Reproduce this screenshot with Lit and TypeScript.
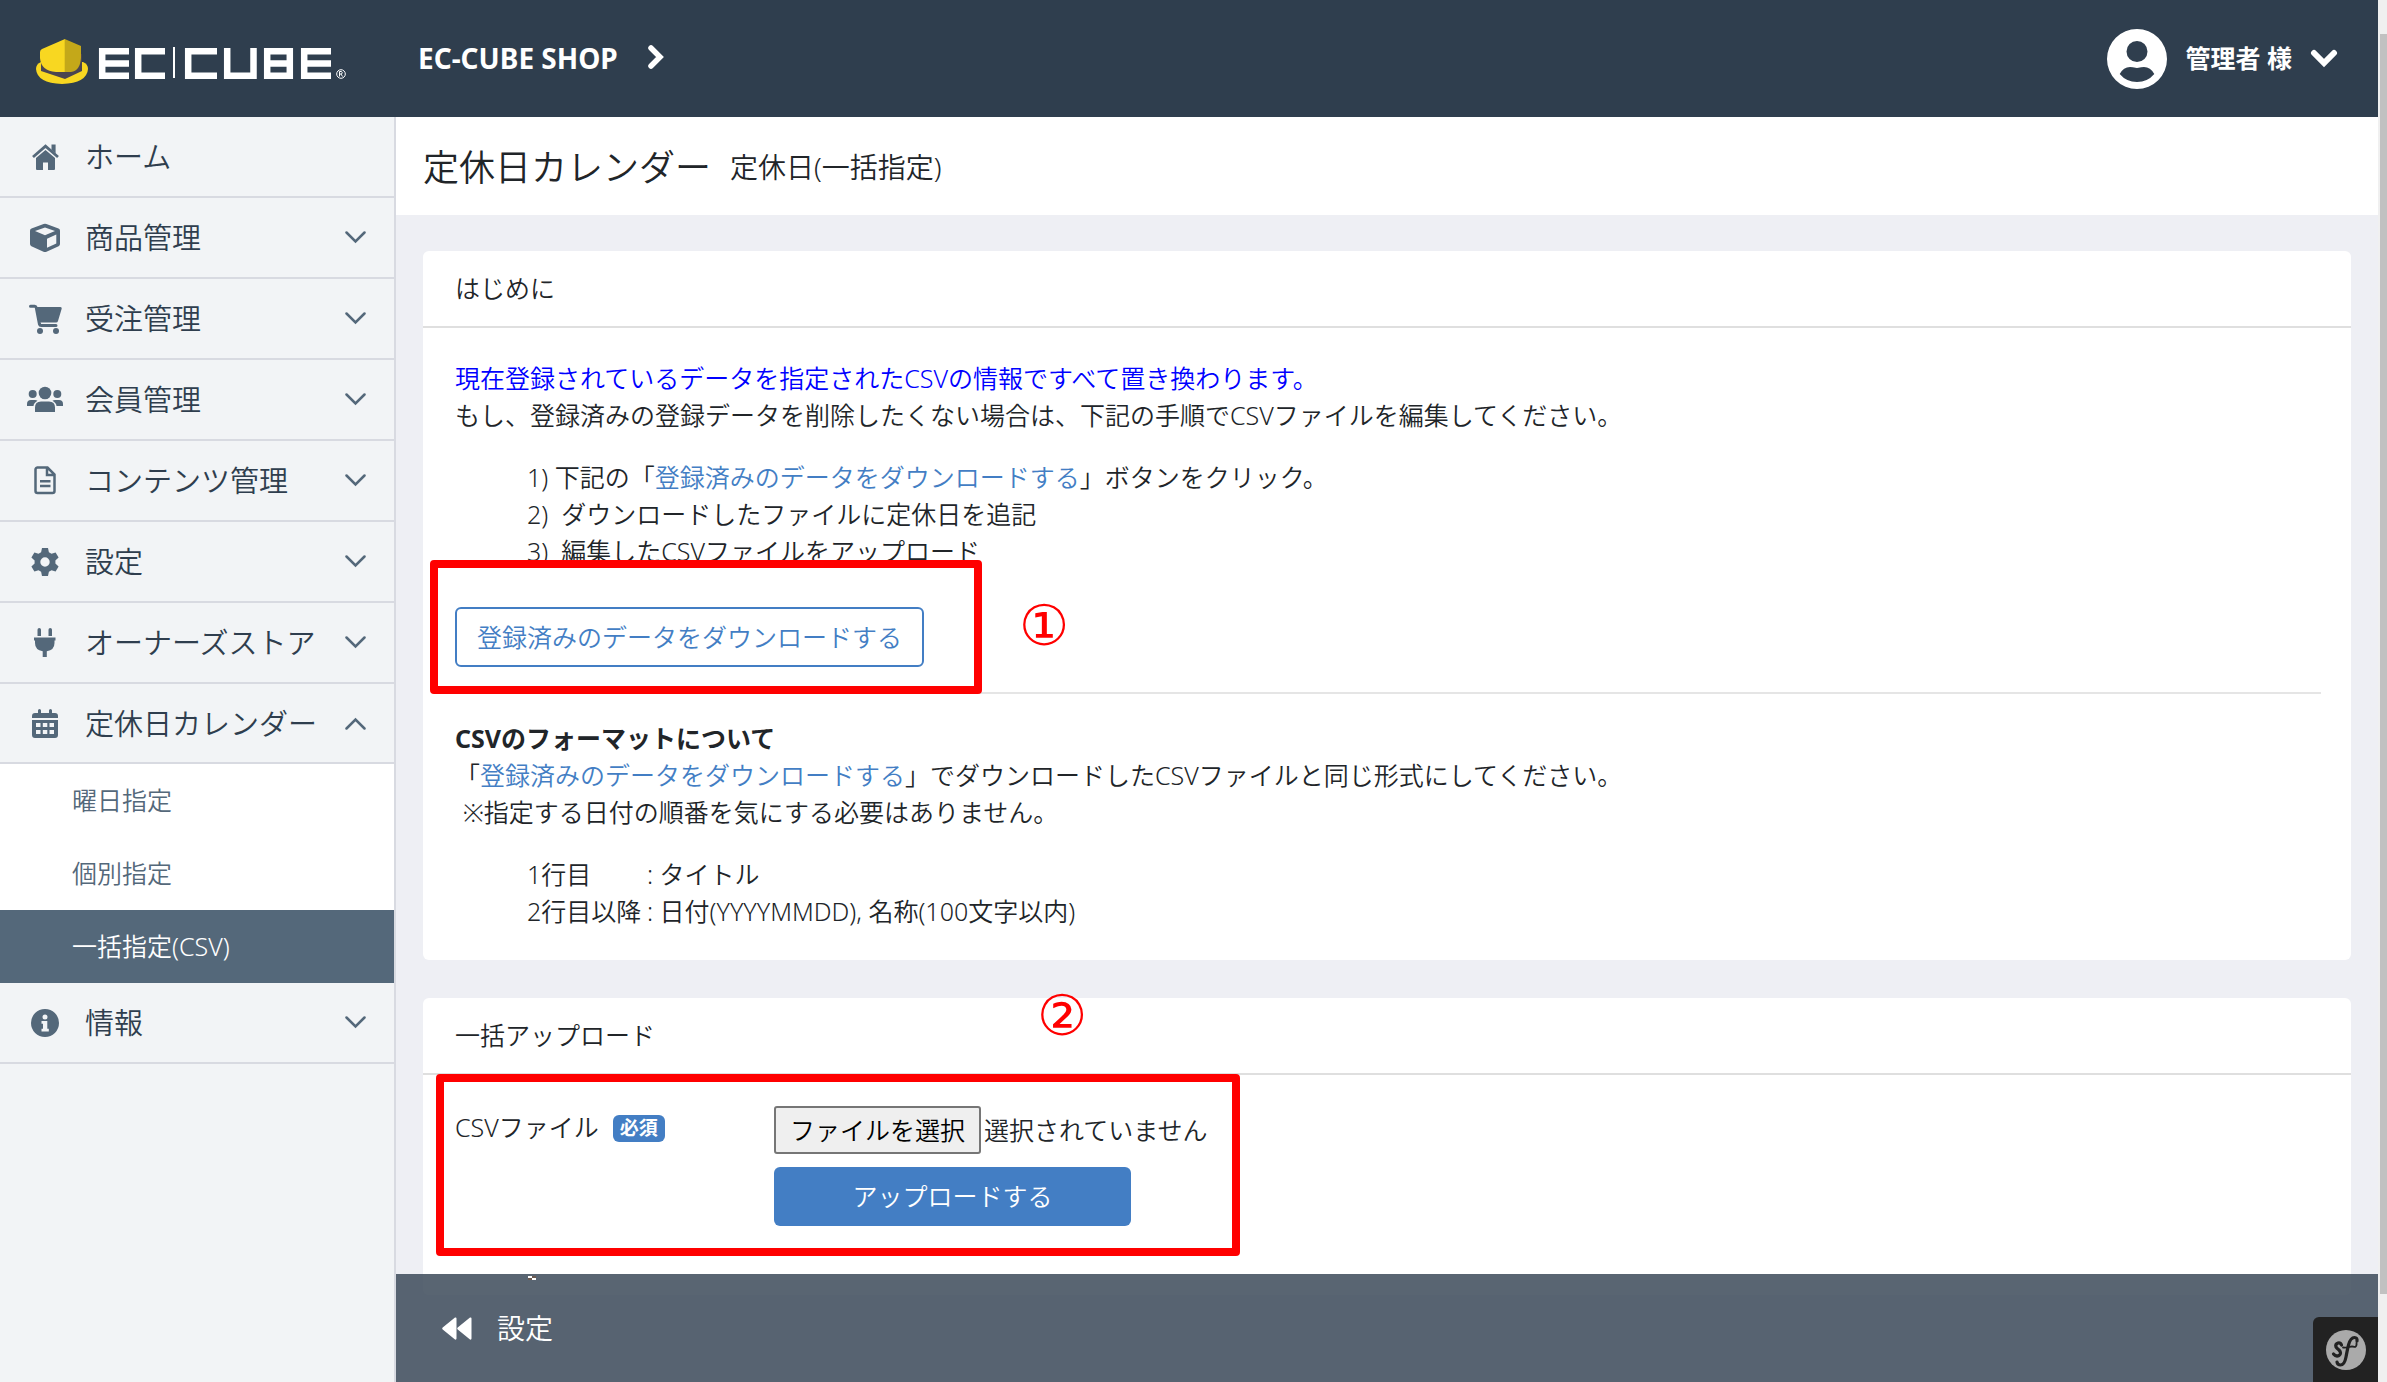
import { LitElement, html, css, svg } from "lit";
import { customElement } from "lit/decorators.js";
import { classMap } from "lit/directives/class-map.js";

const icons: Record<string, unknown> = {
  home: svg`<path d="M2 15 14.5 4.2 27 15" fill="none" stroke="currentColor" stroke-width="2.8"/><path d="M20.500 2.500h4.100v9L20.500 8zM5 16 14.500 8 24 16V27a1 1 0 0 1-1 1H17v-7.500h-5V28H6a1 1 0 0 1-1-1z"/>`,
  cube: svg`<path fill-rule="evenodd" d="M13.600 1 1.500 5.600Q0 6.200 0 7.800V21q0 1.600 1.400 2.300L13.500 28.700q1.500.6 3 0L28.600 23.300Q30 22.600 30 21V7.800q0-1.600-1.500-2.200L16.400 1q-1.400-.5-2.800 0zM15 4.400 25 8.100 15 12.300 5 8.100zM17 15.700 26.300 11.600V20.600L17 24.800z"/>`,
  cart: svg`<path d="M1.500 2.200h4.200q1.200 0 1.600 1.600L10.400 20q.4 1.500 1.800 1.500H27" fill="none" stroke="currentColor" stroke-width="3" stroke-linecap="round"/><path d="M7 3h24a1.600 1.600 0 0 1 1.600 2L29 17q-.4 1.500-2 1.500H9.500z"/><circle cx="11" cy="27" r="3"/><circle cx="27" cy="27" r="3"/>`,
  users: svg`<circle cx="18" cy="7" r="6.300"/><circle cx="5.700" cy="8" r="4"/><circle cx="30.300" cy="8" r="4"/><path d="M8 26v-4.500Q8 15.500 14 15.500h8q6 0 6 6V26zM0 20v-2q0-4 4-4h4q1.500 0 2.500.8Q6.700 17 6.500 20zM36 20v-2q0-4-4-4h-4q-1.500 0-2.500.8 3.800 2.200 4 5.200z"/>`,
  file: svg`<path d="M3 1.500h10.500L20.500 8.500V25a2 2 0 0 1-2 2H3.500a2 2 0 0 1-2-2V3.500a2 2 0 0 1 2-2zM13 2v7h7M6 15.200h10.500M6 20h10.500" fill="none" stroke="currentColor" stroke-width="2.500"/>`,
  gear: svg`<path fill-rule="evenodd" d="M11 0h6l.9 4.200 2.600 1.500 4.100-1.300 3 5.200-3.200 2.900v3l3.200 2.900-3 5.200-4.100-1.300-2.600 1.500L17 28h-6l-.9-4.200-2.600-1.500-4.100 1.300-3-5.200 3.200-2.900v-3L.4 9.600l3-5.200 4.100 1.300 2.600-1.500zM14 9.300a4.700 4.700 0 1 0 0 9.400 4.700 4.700 0 0 0 0-9.400z"/>`,
  plug: svg`<path d="M3.500 8V1.800a1.700 1.700 0 0 1 3.500 0V8zM14.500 8V1.800a1.700 1.700 0 0 1 3.500 0V8zM0 9.500h21.500v3h-1V15q0 7-7.700 8.300V29H8.700v-5.700Q1 22 1 15v-2.500H0z"/>`,
  calendar: svg`<path fill-rule="evenodd" d="M3 4h3V1.500a1.500 1.500 0 0 1 3 0V4h8V1.500a1.500 1.500 0 0 1 3 0V4h3a3 3 0 0 1 3 3v2H0V7a3 3 0 0 1 3-3zM0 11h26v15a3 3 0 0 1-3 3H3a3 3 0 0 1-3-3zM4 14v4h4.500v-4zM10.800 14v4h4.500v-4zM17.500 14v4H22v-4zM4 21v4h4.500v-4zM10.800 21v4h4.500v-4zM17.500 21v4H22v-4z"/>`,
  info: svg`<path fill-rule="evenodd" d="M14 0a14 14 0 1 0 0 28 14 14 0 0 0 0-28zM14 5.500a2.500 2.500 0 1 1 0 5 2.500 2.500 0 0 1 0-5zM10.500 12h5.800v7.800h1.500V22.500h-7.300v-2.700H12v-5h-1.500z"/>`,
};

interface Entry { icon: string; w: number; h: number; label: string; open?: boolean; leaf?: boolean }

const before: Entry[] = [
  { icon: "home", w: 29, h: 29, label: "ホーム", leaf: true },
  { icon: "cube", w: 30, h: 29, label: "商品管理" },
  { icon: "cart", w: 33, h: 30, label: "受注管理" },
  { icon: "users", w: 36, h: 27, label: "会員管理" },
  { icon: "file", w: 22, h: 29, label: "コンテンツ管理" },
  { icon: "gear", w: 28, h: 28, label: "設定" },
  { icon: "plug", w: 22, h: 29, label: "オーナーズストア" },
  { icon: "calendar", w: 26, h: 29, label: "定休日カレンダー", open: true },
];
const after: Entry[] = [{ icon: "info", w: 28, h: 28, label: "情報" }];

const base = css`
  :host { display: block; box-sizing: border-box; }
  *, *::before, *::after { box-sizing: border-box; }
  ul, ol, p, h1, h2, h3, dl, dd { margin: 0; padding: 0; list-style: none; font-weight: inherit; font-size: inherit; }
  a { color: inherit; text-decoration: none; }
  button { font: inherit; color: inherit; background: none; border: 0; padding: 0; margin: 0; text-align: left; cursor: pointer; }
  svg { display: block; flex: none; }
`;

@customElement("shop-header")
class ShopHeader extends LitElement {
  static styles = [base, css`
    :host { background: #2f3e4e; color: #fff; font-weight: 700; }
    .bar { display: flex; align-items: center; height: 117px; padding: 0 40px 0 35px; }
    .logo { margin-right: 71px; }
    .shop { display: flex; align-items: center; gap: 29px; font-size: 28px; }
    .user { display: flex; align-items: center; gap: 18px; margin-left: auto; font-size: 25px; }
  `];
  render() {
    return html`
      <header class="bar">
        <a class="logo" href="#" aria-label="EC-CUBE">
          <svg width="312" height="51" viewBox="0 -1 312 51">
            <path d="M6 28Q1 30 1 35q1 14 26 15 25-1 26-15 0-5-5-7z" fill="#f8d721"/>
            <path d="M6 22v15l24 8 17-8V20z" fill="#4b4550"/>
            <path d="M30 5 7 15q-2 1-2 3v6q1 13 16 14h9z" fill="#f8d721"/>
            <path d="M29.700 5 46 12v12q-1 13-10 14h-6.300z" fill="#c4a819"/>
            <g fill="none" stroke="#fff" stroke-width="6.500">
              <path d="M94 17.200H67.200v24.600H94M67 29.500h27M130 17.200h-26.800v24.600H130"/>
              <path d="M182 17.200h-28.800v24.600H182M192.200 14v27.800h26.300V14M232.200 14v31M229 17.200h25.800v24.600H229M232 29.500h23M296 17.200h-26.800v24.600H296M269 29.500h27"/>
            </g>
            <path d="M139 13v31" stroke="#fff" stroke-width="2"/>
            <circle cx="306" cy="40" r="4.300" fill="none" stroke="#fff"/>
            <path d="M304.500 42.500v-5h2q1.500 1.300 0 2.500h-2M306 40l1.500 2.500" fill="none" stroke="#fff"/>
          </svg>
        </a>
        <a class="shop" href="#">EC-CUBE SHOP
          <svg width="18" height="30" viewBox="0 0 18 30"><path d="M4 4l9 9-9 9" fill="none" stroke="#fff" stroke-width="5.500" stroke-linecap="round" stroke-linejoin="miter"/></svg>
        </a>
        <button class="user">
          <svg width="60" height="60" viewBox="0 0 60 60" fill="#fff"><path fill-rule="evenodd" d="M30 0a30 30 0 1 0 0 60 30 30 0 0 0 0-60zM30 12a10.500 10.500 0 1 1 0 21 10.500 10.500 0 0 1 0-21zM30 53q-10.500 0-17.300-8 3.800-7 10.300-7 2 0 7 1 5-1 7-1 6.500 0 10.300 7-6.800 8-17.300 8z"/></svg>
          <span>管理者 様</span>
          <svg width="28" height="20" viewBox="0 0 28 20"><path d="M4 4l10 10 10-10" fill="none" stroke="#fff" stroke-width="6" stroke-linecap="round"/></svg>
        </button>
      </header>`;
  }
}

@customElement("side-nav")
class SideNav extends LitElement {
  static styles = [base, css`
    :host { background: #f2f4f6; border-right: 2px solid #d8dae1; color: #2f3e4e; }
    .entry { display: grid; grid-template-columns: 50px 1fr 21px; column-gap: 15px; align-items: center; width: 100%; height: 81px; padding: 0 28px 0 20px; border-bottom: 2px solid #d8dae1; font-size: 29px; white-space: nowrap; }
    .open { height: 80px; }
    .icon { justify-self: center; fill: currentColor; }
    .tint { color: #54687a; }
    .up { transform: rotate(180deg); }
    .sub { display: flex; align-items: center; height: 73px; padding-left: 72px; background: #fff; color: #54687a; font-size: 25px; }
    .on { background: #54687a; color: #fff; }
  `];
  entry(e: Entry) {
    const body = html`
      <svg class="icon tint" width=${e.w} height=${e.h} viewBox="0 0 ${e.w} ${e.h}">${icons[e.icon]}</svg>
      <span>${e.label}</span>
      ${e.leaf ? "" : html`<svg class=${classMap({ tint: true, up: !!e.open })} width="21" height="13" viewBox="0 0 21 13"><path d="M1.500 1.500l9 9 9-9" fill="none" stroke="currentColor" stroke-width="2.500" stroke-linecap="round"/></svg>`}`;
    return html`<li>${e.leaf
      ? html`<a class="entry" href="#">${body}</a>`
      : html`<button class=${classMap({ entry: true, open: !!e.open })} aria-expanded=${e.open ? "true" : "false"}>${body}</button>`}</li>`;
  }
  render() {
    return html`<nav><ul>
      ${before.map((e) => this.entry(e))}
      <li><ul>
        ${["曜日指定", "個別指定", "一括指定(CSV)"].map((t, i) => html`<li><a class=${classMap({ sub: true, on: i === 2 })} href="#">${t}</a></li>`)}
      </ul></li>
      ${after.map((e) => this.entry(e))}
    </ul></nav>`;
  }
}

@customElement("intro-card")
class IntroCard extends LitElement {
  static styles = [base, css`
    .card { position: relative; background: #fff; border-radius: 6px; }
    .head { height: 77px; padding: 0 32px; line-height: 75px; border-bottom: 2px solid #dfdfdf; }
    .body { padding: 32px 30px 30px 32px; line-height: 37px; }
    .warn { color: #00f; }
    .list { padding: 25px 0 0 72px; }
    .link { color: #437ec4; }
    .wide { white-space: pre; }
    .download { display: block; height: 60px; margin-top: 37px; padding: 0 20px; border: 2px solid #437ec4; border-radius: 6px; color: #437ec4; }
    .rule { height: 2px; margin: 25px 0 26px; border: 0; background: #e5e5e5; }
    .title { font-weight: 700; }
    .note { padding-left: 8px; }
    .term { display: inline-block; width: 120px; }
    .frame { position: absolute; left: 7px; top: 309px; width: 552px; height: 134px; border: 8px solid #f00; border-radius: 4px; }
    .mark { position: absolute; left: 596px; top: 345px; font: 56px/60px "DejaVu Sans", sans-serif; color: #f00; }
  `];
  render() {
    const name = html`<span class="link">登録済みのデータをダウンロードする</span>`;
    return html`<section class="card">
      <h2 class="head">はじめに</h2>
      <div class="body">
        <p class="warn">現在登録されているデータを指定されたCSVの情報ですべて置き換わります。</p>
        <p>もし、登録済みの登録データを削除したくない場合は、下記の手順でCSVファイルを編集してください。</p>
        <ol class="list">
          <li>1) 下記の「${name}」ボタンをクリック。</li>
          <li class="wide">2)  ダウンロードしたファイルに定休日を追記</li>
          <li class="wide">3)  編集したCSVファイルをアップロード</li>
        </ol>
        <button class="download">登録済みのデータをダウンロードする</button>
        <hr class="rule">
        <h3 class="title">CSVのフォーマットについて</h3>
        <p>「${name}」でダウンロードしたCSVファイルと同じ形式にしてください。</p>
        <p class="note">※指定する日付の順番を気にする必要はありません。</p>
        <ul class="list">
          <li><span class="term">1行目</span>: タイトル</li>
          <li><span class="term">2行目以降</span>: 日付(YYYYMMDD), 名称(100文字以内)</li>
        </ul>
      </div>
      <div class="frame"></div>
      <span class="mark">①</span>
    </section>`;
  }
}

@customElement("upload-card")
class UploadCard extends LitElement {
  static styles = [base, css`
    .card { position: relative; background: #fff; border-radius: 6px; }
    .head { height: 77px; padding: 0 32px; line-height: 75px; border-bottom: 2px solid #dfdfdf; }
    .body { display: grid; grid-template-columns: 319px 1fr; padding: 31px 32px 69px; }
    .label { display: flex; align-items: center; align-self: start; gap: 14px; height: 42px; }
    .badge { margin-top: 2px; padding: 0 7px; line-height: 27px; border-radius: 6px; background: #437ec4; color: #fff; font-size: 19px; font-weight: 700; }
    .fields { display: grid; justify-items: start; gap: 13px; }
    .picker { position: relative; display: flex; align-items: center; gap: 3px; }
    .choose { padding: 0 14px; line-height: 44px; border: 2px solid #767676; border-radius: 3px; background: #efefef; color: #000; }
    .file { position: absolute; inset: 0; width: 100%; height: 100%; opacity: 0; }
    .send { width: 357px; height: 59px; border-radius: 6px; background: #437ec4; color: #fff; text-align: center; }
    .frame { position: absolute; left: 13px; top: 76px; width: 804px; height: 182px; border: 8px solid #f00; border-radius: 4px; pointer-events: none; }
    .mark { position: absolute; left: 614px; top: -12px; font: 56px/60px "DejaVu Sans", sans-serif; color: #f00; }
  `];
  render() {
    return html`<section class="card">
      <h2 class="head">一括アップロード</h2>
      <div class="body">
        <label class="label" for="csv">CSVファイル<span class="badge">必須</span></label>
        <div class="fields">
          <div class="picker"><span class="choose">ファイルを選択</span><span>選択されていません</span><input class="file" id="csv" type="file"></div>
          <button class="send">アップロードする</button>
        </div>
      </div>
      <div class="frame"></div>
      <span class="mark">②</span>
    </section>`;
  }
}

@customElement("app-root")
class AppRoot extends LitElement {
  static styles = [base, css`
    :host { display: grid; grid-template-columns: 1fr 9px; height: 100vh; overflow: hidden; color: #212529; font: 350 25px/37px "Noto Sans", "Noto Sans CJK JP", sans-serif; }
    .page { display: grid; grid-template: auto minmax(0, 1fr) / 396px minmax(0, 1fr); min-height: 0; }
    .top { grid-column: 1 / 3; }
    .main { position: relative; background: #eeeff4; overflow: hidden; }
    .title { display: flex; align-items: center; gap: 19px; height: 98px; padding: 2px 27px 0; background: #fff; font-size: 36px; }
    .small { font-size: 28px; }
    .cards { display: grid; gap: 38px; padding: 36px 27px; }
    .foot { position: absolute; left: 0; right: 0; bottom: 0; display: flex; align-items: center; height: 108px; padding: 0 46px; background: rgba(66, 80, 95, .88); color: #fff; font-size: 28px; }
    .back { display: flex; align-items: center; gap: 25px; }
    .speck { position: absolute; left: 132px; top: 2px; }
    .debug { position: absolute; right: 0; bottom: 0; display: grid; place-items: center; width: 65px; height: 65px; border-radius: 6px 0 0 0; background: #222; }
    .track { background: #f0f0f0; padding: 34px 0 88px 2px; }
    .thumb { height: 100%; background: #c1c1c1; }
  `];
  render() {
    return html`
      <div class="page">
        <shop-header class="top"></shop-header>
        <side-nav></side-nav>
        <main class="main">
          <h1 class="title">定休日カレンダー<span class="small">定休日(一括指定)</span></h1>
          <div class="cards">
            <intro-card></intro-card>
            <upload-card></upload-card>
          </div>
          <footer class="foot">
            <svg class="speck" width="8" height="4" viewBox="0 0 8 4"><path d="M4 0h4v2H4zM0 2h4v2H0z" fill="#6b5a50"/><path d="M0 0h4v2H0zM4 2h4v2H4z" fill="#fff"/></svg>
            <a class="back" href="#">
              <svg width="30" height="23" viewBox="0 0 30 23" fill="#fff"><path d="M14.500 1.500v20q0 1.500-1.500 1L.7 12.600q-1-1.100 0-2.200L13 .5q1.500-.5 1.500 1zM29.500 1.500v20q0 1.500-1.500 1L15.700 12.600q-1-1.100 0-2.200L28 .5q1.500-.5 1.500 1z"/></svg>
              設定
            </a>
          </footer>
          <button class="debug" aria-label="Symfony">
            <svg width="40" height="40" viewBox="0 0 40 40"><circle cx="20" cy="20" r="20" fill="#aaa"/><g fill="none" stroke="#222" stroke-linecap="round"><path d="M15.500 15q-1-2.500-3.500-2-3 1-2 4 .5 1 3 3 3 3 0 5.500-3 1.500-5.500-1.500" stroke-width="3.200"/><path d="M31 11q.5-3.500-2.500-3.500-4 0-6 7.500-1 4-2.500 12-1.500 8-5.500 8-3 0-3.500-3" stroke-width="3.200"/><path d="M17 17.500q3 .5 6-.5t6 0q2-1 1.500-4" stroke-width="1.800"/></g></svg>
          </button>
        </main>
      </div>
      <div class="track"><div class="thumb"></div></div>`;
  }
}
